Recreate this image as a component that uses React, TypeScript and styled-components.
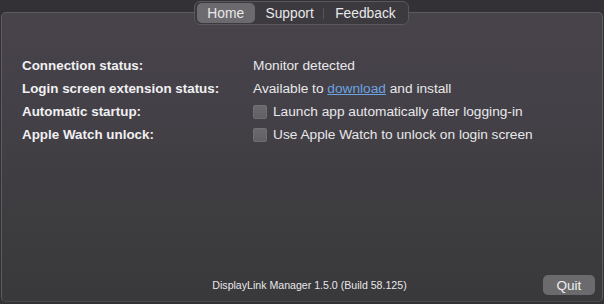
import React from 'react'
import styled, { createGlobalStyle } from 'styled-components'

const GlobalStyle = createGlobalStyle`
  html, body {
    margin: 0;
    padding: 0;
    background: #333036;
  }
  body {
    font-family: "Liberation Sans", Arial, sans-serif;
    -webkit-font-smoothing: antialiased;
  }
`

const Window = styled.div`
  width: 604px;
  height: 304px;
  background: #333036;
  display: flex;
  flex-direction: column;
  align-items: center;
  padding-top: 1px;
  box-sizing: border-box;
  overflow: hidden;
`

const Segmented = styled.div`
  position: relative;
  z-index: 1;
  display: flex;
  align-items: center;
  height: 24px;
  box-sizing: border-box;
  padding: 0 2px;
  border: 1px solid #5a575d;
  border-radius: 6px;
  background: #3c393f;
  margin-right: 1px;
`

const Segment = styled.div<{ $active?: boolean; $divider?: boolean }>`
  height: 20px;
  display: flex;
  align-items: center;
  padding: 0 10.7px;
  border-radius: 5px;
  font-size: 13.8px;
  color: #e8e8ea;
  background: ${({ $active }) => ($active ? '#6c6a6e' : 'transparent')};
  position: relative;
  ${({ $divider }) =>
    $divider
      ? `&::after {
    content: '';
    position: absolute;
    right: 0;
    top: 5px;
    height: 11px;
    width: 1px;
    background: #56535a;
  }`
      : ''}
`

const Panel = styled.div`
  margin-top: -13px;
  width: 602px;
  flex: 1;
  margin-bottom: 2px;
  box-sizing: border-box;
  border: 1px solid #5d5a60;
  border-bottom-color: #4a494c;
  border-radius: 5px;
  background: linear-gradient(180deg, #48434a 0%, #444047 35%, #3d3c3f 70%, #39383b 100%);
  display: flex;
  flex-direction: column;
  padding: 41px 7px 6px 20px;
`

const Grid = styled.div`
  display: grid;
  grid-template-columns: 231px 1fr;
  grid-auto-rows: 23px;
  align-items: center;
`

const Label = styled.div`
  font-size: 13.4px;
  font-weight: bold;
  color: #f0f0f2;
`

const Value = styled.div`
  font-size: 13.7px;
  color: #e8e8ea;
  display: flex;
  align-items: center;
  gap: 6px;
`

const Link = styled.span`
  color: #6ba4e2;
  text-decoration: underline;
`

const Check = styled.span`
  width: 14px;
  height: 14px;
  border-radius: 3px;
  background: linear-gradient(180deg, #6c6a6e, #625f64);
  box-shadow: inset 0 0 0 0.5px #7a787c;
  flex-shrink: 0;
`

const Footer = styled.div`
  margin-top: auto;
  display: flex;
  align-items: center;
`

const Version = styled.div`
  flex: 1;
  text-align: center;
  font-size: 10.6px;
  color: #e8e8ea;
  padding-left: 54px;
`

const QuitButton = styled.button`
  width: 52px;
  height: 20px;
  border: none;
  border-radius: 5px;
  background: #6b6a6d;
  color: #f0f0f2;
  font-family: inherit;
  font-size: 13.5px;
  padding: 0;
`

const rows: { label: string; value: React.ReactNode; check?: boolean }[] = [
  { label: 'Connection status:', value: 'Monitor detected' },
  {
    label: 'Login screen extension status:',
    value: (
      <>
        Available to <Link>download</Link> and install
      </>
    ),
  },
  { label: 'Automatic startup:', value: 'Launch app automatically after logging-in', check: true },
  { label: 'Apple Watch unlock:', value: 'Use Apple Watch to unlock on login screen', check: true },
]

const App = () => {
  return (
    <Window>
      <GlobalStyle />
      <Segmented>
        <Segment $active>Home</Segment>
        <Segment $divider>Support</Segment>
        <Segment>Feedback</Segment>
      </Segmented>
      <Panel>
        <Grid>
          {rows.map((r) => (
            <React.Fragment key={r.label}>
              <Label>{r.label}</Label>
              <Value>
                {r.check && <Check />}
                <span>{r.value}</span>
              </Value>
            </React.Fragment>
          ))}
        </Grid>
        <Footer>
          <Version>DisplayLink Manager 1.5.0 (Build 58.125)</Version>
          <QuitButton>Quit</QuitButton>
        </Footer>
      </Panel>
    </Window>
  )
}

export default App
